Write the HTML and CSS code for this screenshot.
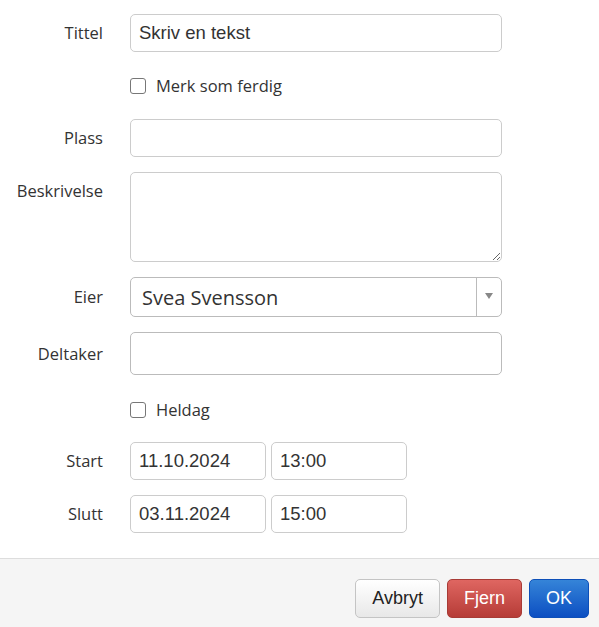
FILE: index.html
```html
<!DOCTYPE html>
<html lang="no">
  <head>
    <meta charset="utf-8">
    <meta name="viewport" content="width=device-width, initial-scale=1">
    <title>Avtale</title>
    <link rel="stylesheet" href="styles.css">
  </head>

  <body>
    <form class="evForm">
      <label class="evLabel" for="evTitle">Tittel</label>
      <input class="evInput" id="evTitle" type="text" value="Skriv en tekst">

      <span></span>
      <label class="evCheck"><input type="checkbox"> Merk som ferdig</label>

      <label class="evLabel" for="evPlace">Plass</label>
      <input class="evInput" id="evPlace" type="text">

      <label class="evLabel" for="evDesc">Beskrivelse</label>
      <textarea class="evInput evText" id="evDesc"></textarea>

      <label class="evLabel evLabel-owner" for="evOwner">Eier</label>
      <div class="evSelect">
        <select id="evOwner">
          <option>Svea Svensson</option>
        </select>
        <span class="evSelect-arrow"></span>
      </div>

      <label class="evLabel evLabel-guest" for="evGuest">Deltaker</label>
      <input class="evInput evGuest" id="evGuest" type="text">

      <span></span>
      <label class="evCheck evCheck-allday"><input type="checkbox"> Heldag</label>

      <label class="evLabel" for="evStartDate">Start</label>
      <div class="evWhen">
        <input class="evInput" id="evStartDate" type="text" value="11.10.2024">
        <input class="evInput" type="text" value="13:00">
      </div>

      <label class="evLabel" for="evEndDate">Slutt</label>
      <div class="evWhen">
        <input class="evInput" id="evEndDate" type="text" value="03.11.2024">
        <input class="evInput" type="text" value="15:00">
      </div>
    </form>

    <div class="evFooter">
      <button type="button" class="evBtn">Avbryt</button>
      <button type="button" class="evBtn evBtn-danger">Fjern</button>
      <button type="button" class="evBtn evBtn-primary">OK</button>
    </div>
  </body>
</html>
```

FILE: styles.css
```css
body {
  margin: 0;
  background: #fff;
  color: #333;
}

.evForm {
  display: grid;
  grid-template-columns: 103px 372px;
  column-gap: 27px;
  row-gap: 15px;
  padding-top: 14px;
  margin-bottom: 25px;
}

.evLabel {
  font-family: "Open Sans", sans-serif;
  font-size: 16.5px;
  line-height: 38px;
  text-align: right;
  color: #333;
}
.evLabel-owner { line-height: 40px; }
.evLabel-guest { line-height: 43px; }

.evInput {
  box-sizing: border-box;
  width: 100%;
  height: 38px;
  margin: 0;
  padding: 0 8px;
  border: 1px solid #ccc;
  border-radius: 5px;
  font-family: "Liberation Sans", Arial, sans-serif;
  font-size: 18.5px;
  color: #333;
  background: #fff;
}
.evText {
  height: 90px;
  resize: vertical;
}
.evGuest {
  height: 43px;
  border-color: #bbb;
}

.evCheck {
  display: flex;
  align-items: center;
  gap: 10px;
  height: 37px;
  font-family: "Open Sans", sans-serif;
  font-size: 16.5px;
  color: #333;
}
.evCheck-allday { padding-top: 2px; height: 35px; }
.evCheck input {
  appearance: none;
  box-sizing: border-box;
  width: 16px;
  height: 16px;
  margin: 0;
  border: 1px solid #777;
  border-radius: 3px;
  background: #fff;
}

.evSelect {
  display: flex;
  box-sizing: border-box;
  height: 40px;
  border: 1px solid #bbb;
  border-radius: 5px;
  background: #fff;
}
.evSelect select {
  flex: 1;
  appearance: none;
  border: 0;
  background: transparent;
  padding: 0 11px;
  font-family: "Open Sans", sans-serif;
  font-size: 20px;
  color: #333;
}
.evSelect-arrow {
  width: 24px;
  border-left: 1px solid #bbb;
  display: flex;
  align-items: center;
  justify-content: center;
}
.evSelect-arrow::after {
  content: "";
  border-left: 4px solid transparent;
  border-right: 4px solid transparent;
  border-top: 6px solid #888;
  margin-bottom: 2px;
}

.evWhen {
  display: flex;
  gap: 5px;
}
.evWhen .evInput {
  width: 136px;
}

.evFooter {
  display: flex;
  justify-content: flex-end;
  gap: 7px;
  padding: 20px 10px 10px;
  border-top: 1px solid #ddd;
  background: #f5f5f5;
  min-height: 38px;
}

.evBtn {
  height: 39px;
  padding: 0 16px;
  border: 1px solid #c4c4c4;
  border-radius: 5px;
  font-family: "Liberation Sans", Arial, sans-serif;
  font-size: 18px;
  color: #222;
  background: linear-gradient(#fff, #e8e8e8);
}
.evBtn-danger {
  color: #fff;
  border-color: #a83b36;
  background: linear-gradient(#df6661, #b63c37);
}
.evBtn-primary {
  color: #fff;
  border-color: #0d4fb8;
  background: linear-gradient(#3584d8, #0c4fc2);
}
```
